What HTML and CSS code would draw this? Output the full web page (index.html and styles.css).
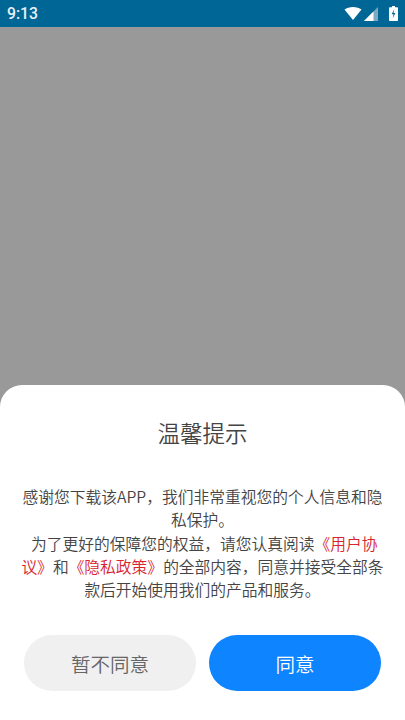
FILE: index.html
```html
<!DOCTYPE html>
<html lang="zh">
<head>
<meta charset="utf-8">
<title>温馨提示</title>
<link rel="stylesheet" href="styles.css">
</head>
<body>
<div class="screen">
  <header class="status">
    <span class="time">9:13</span>
    <span class="icons">
      <svg class="wifi" viewBox="0 0 17 13"><path d="M0 2.600C2.200.9 5.200 0 8.500 0s6.300.9 8.500 2.600L8.500 13z" fill="#fff"/></svg>
      <svg class="signal" viewBox="0 0 14 14"><path d="M14 0v14H0z" fill="#7fa9c2"/><path d="M9.500 4.500V14H0z" fill="#fff"/></svg>
      <svg class="battery" viewBox="0 0 9 15"><path d="M3 0h3v1.300h2.200a.8.8 0 0 1 .8.800v12.100a.8.8 0 0 1-.8.800H.8a.8.8 0 0 1-.8-.8V2.100a.8.8 0 0 1 .8-.8H3z" fill="#fff"/><path d="M5.300 3.200 2.600 8.300h1.900l-.8 3.900 2.700-5.300H4.500z" fill="#006695"/></svg>
    </span>
  </header>
  <div class="backdrop"></div>
  <section class="sheet">
    <h1 class="title">温馨提示</h1>
    <p class="body">感谢您下载该APP，我们非常重视您的个人信息和隐私保护。<br>&nbsp;为了更好的保障您的权益，请您认真阅读<span class="link">《用户协议》</span>和<span class="link">《隐私政策》</span>的全部内容，同意并接受全部条款后开始使用我们的产品和服务。</p>
    <div class="actions">
      <button class="btn decline">暂不同意</button>
      <button class="btn accept">同意</button>
    </div>
  </section>
</div>
</body>
</html>
```
FILE: styles.css
```css
* { box-sizing: border-box; }
html, body { margin: 0; padding: 0; }
body { font-family: "Noto Sans CJK SC", "Noto Sans", sans-serif; background: #fff; }
.screen { width: 405px; height: 720px; display: flex; flex-direction: column; overflow: hidden; }
.status { height: 27px; flex: none; background: #006695; color: #fff; display: flex; align-items: center; justify-content: space-between; padding: 0 7px 0 7px; }
.time { font-family: Roboto, sans-serif; font-size: 15.750px; font-weight: 500; color: #e8f0f5; }
.icons { display: flex; align-items: center; gap: 2px; }
.wifi { width: 18px; height: 13px; }
.signal { width: 14px; height: 14px; margin-right: 9px; }
.battery { width: 9px; height: 15px; }
.backdrop { flex: 1; background: #999; }
.sheet { flex: none; height: 335px; margin-top: -22px; background: #fff; border-radius: 22px 22px 0 0; padding: 31px 20px 0; display: flex; flex-direction: column; align-items: center; position: relative; }
.title { margin: 0; font-size: 22.500px; font-weight: 350; line-height: 32px; color: #444; text-align: center; }
.body { margin: 37px 0 0; width: 364px; font-size: 15.750px; font-weight: 350; line-height: 23.300px; color: #444; text-align: center; }
.link { color: #d9232e; }
.actions { margin-top: 34px; display: flex; gap: 13px; }
.btn { width: 172px; height: 56px; border: 0; border-radius: 28px; font: inherit; font-size: 19.500px; font-weight: 350; }
.decline { background: #f0f0f0; color: #666; }
.accept { background: #0f84ff; color: #fff; }
```
